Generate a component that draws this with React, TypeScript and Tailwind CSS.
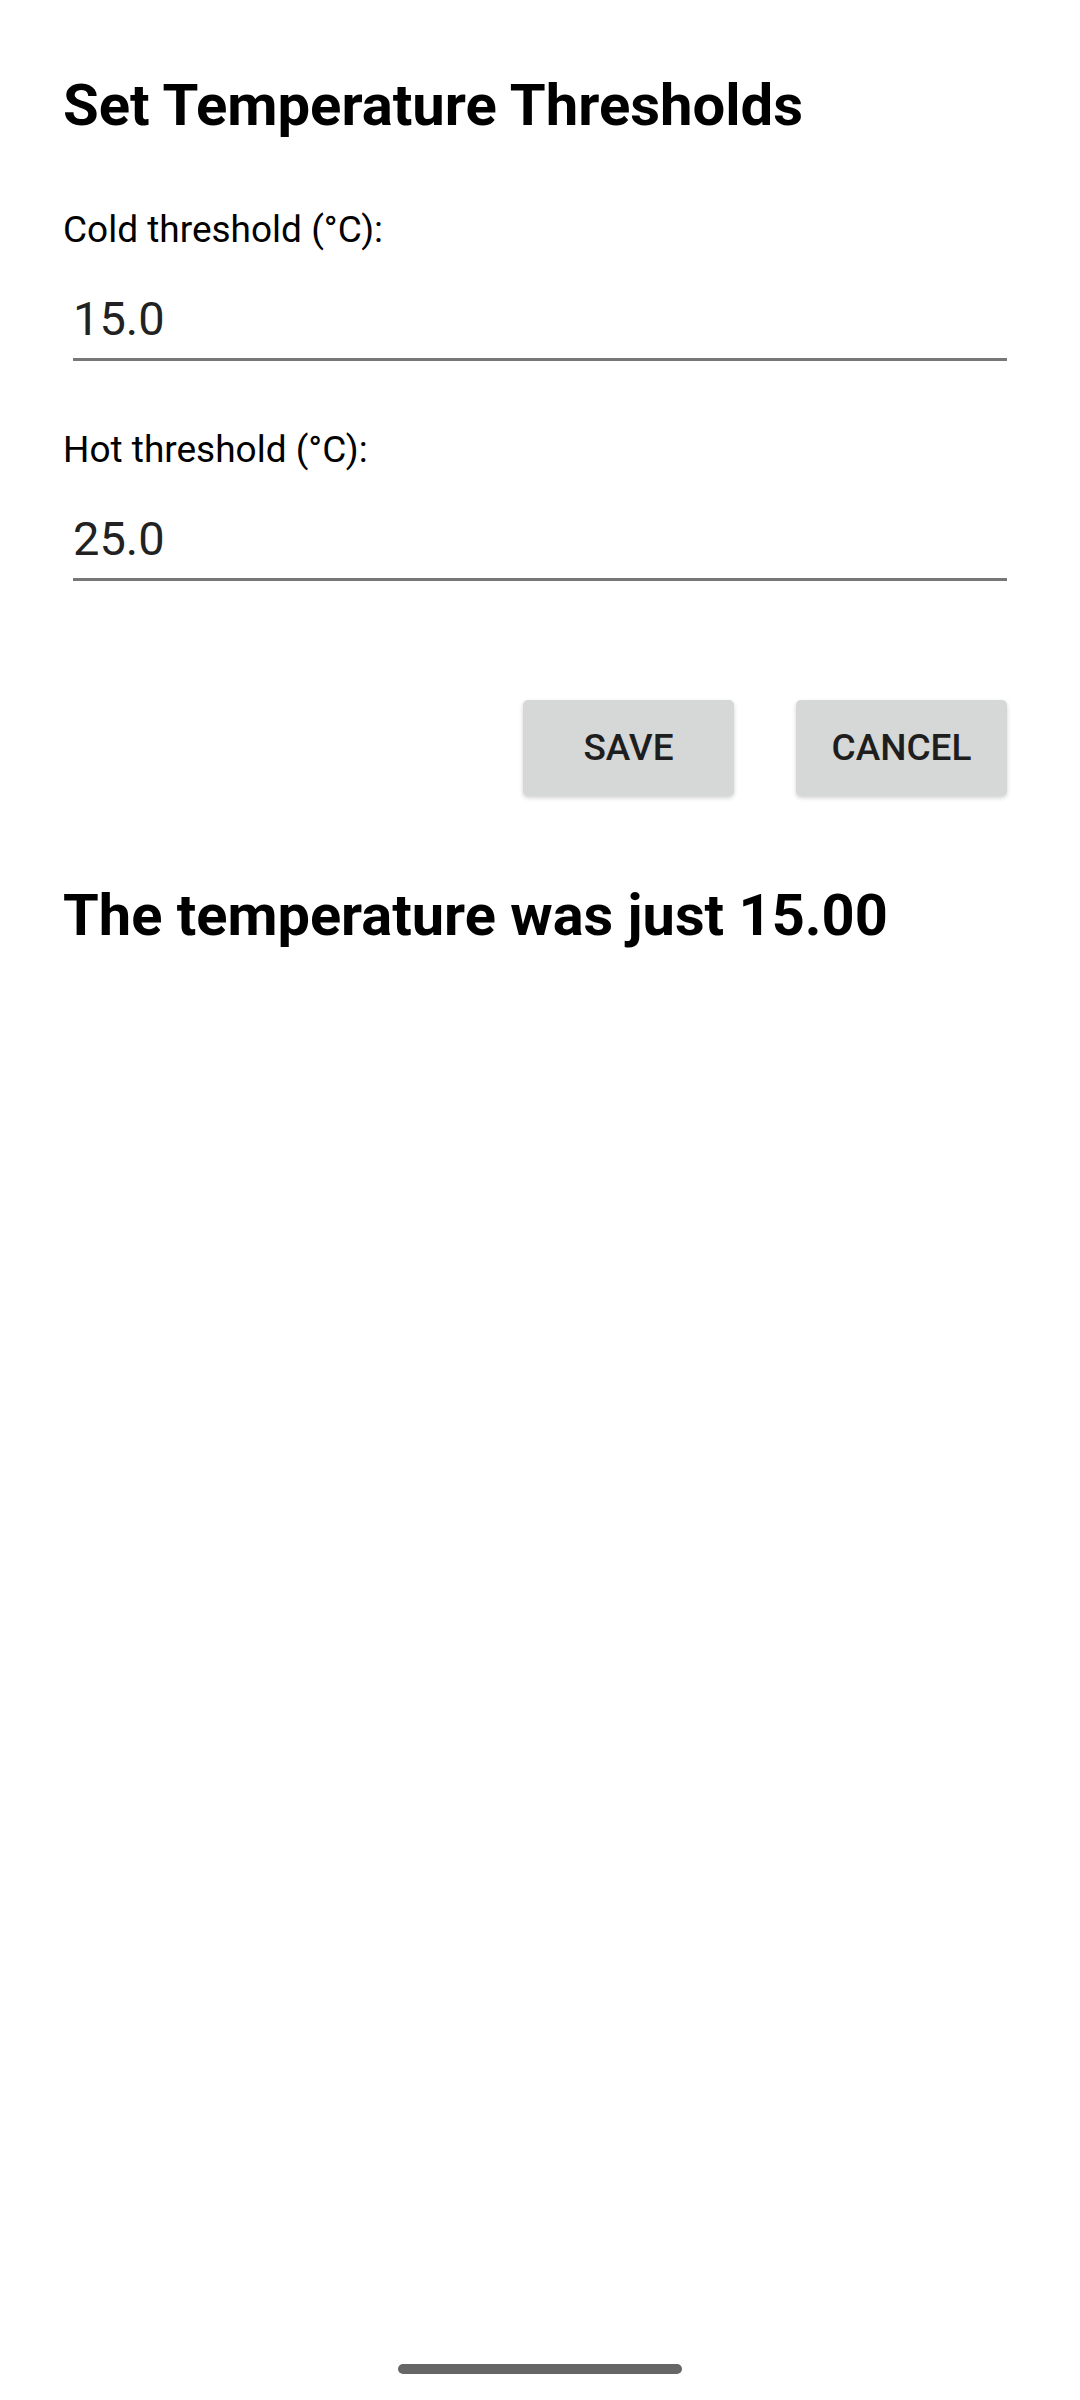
import React from "react";

export default function App() {
  return (
    <div
      className="relative w-[1080px] h-[2400px] bg-white overflow-hidden"
      style={{ fontFamily: "Roboto, 'Noto Sans', sans-serif" }}
    >
      <div className="flex flex-col pl-[63px] pr-[73px]">
        <h1 className="mt-[71px] text-[58px] leading-[68px] font-bold text-black">
          Set Temperature Thresholds
        </h1>

        <div className="mt-[69px] text-[37px] leading-[43px] text-black">
          Cold threshold (°C):
        </div>
        <div className="mt-[40px] ml-[10px] border-b-[3px] border-[#777777] pb-[12px] text-[47px] leading-[55px] text-[#222222]">
          15.0
        </div>

        <div className="mt-[67px] text-[37px] leading-[43px] text-black">
          Hot threshold (°C):
        </div>
        <div className="mt-[40px] ml-[10px] border-b-[3px] border-[#777777] pb-[12px] text-[47px] leading-[55px] text-[#222222]">
          25.0
        </div>

        <div className="mt-[119px] flex justify-end gap-[62px]">
          <button className="w-[211px] h-[96px] rounded-[5px] bg-[#d6d7d7] shadow-[0_2px_4px_rgba(0,0,0,0.18)] text-[37px] font-medium text-[#1e1e1e]">
            SAVE
          </button>
          <button className="w-[211px] h-[96px] rounded-[5px] bg-[#d6d7d7] shadow-[0_2px_4px_rgba(0,0,0,0.18)] text-[37px] font-medium text-[#1e1e1e]">
            CANCEL
          </button>
        </div>

        <div className="mt-[85px] text-[57.75px] leading-[68px] font-bold text-black">
          The temperature was just 15.00
        </div>
      </div>

      <div className="absolute left-[398px] top-[2364px] w-[284px] h-[10px] rounded-full bg-[#666666]" />
    </div>
  );
}
